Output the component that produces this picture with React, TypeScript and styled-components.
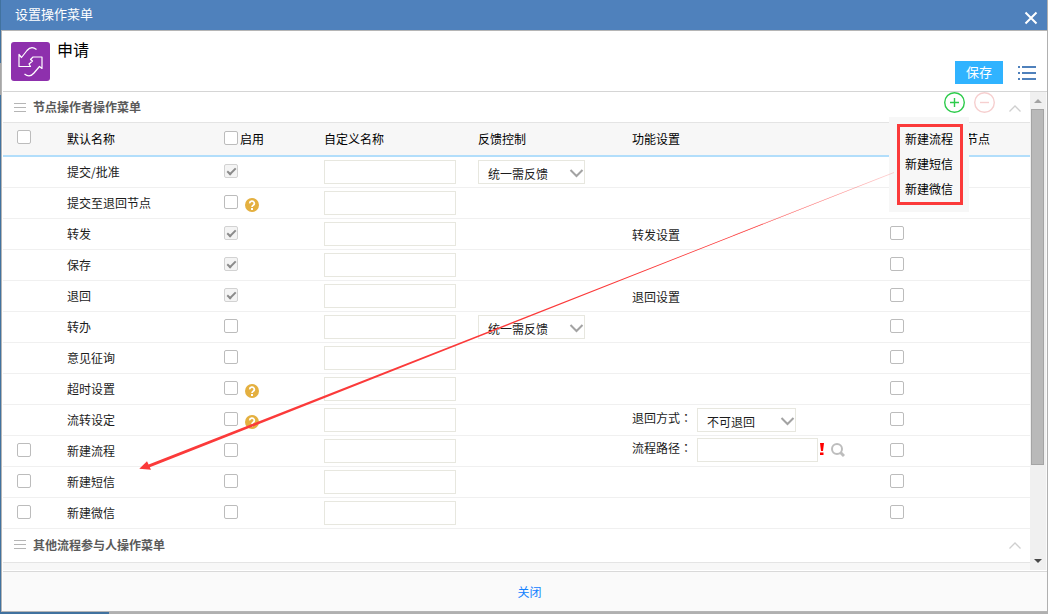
import React from "react";
import styled, { createGlobalStyle } from "styled-components";

const Global = createGlobalStyle`
  *, *::before, *::after { box-sizing: border-box; }
  body {
    margin: 0;
    background: #b0b0b0;
    color: #1c1c1c;
    font-family: "Noto Sans CJK SC", sans-serif;
    font-size: 12px;
    line-height: 16px;
  }
  button, input, select { font: inherit; color: inherit; margin: 0; }
`;

const Backdrop = styled.div`
  min-height: 100vh;
  display: flex;
  padding: 0 1px 2px 1px;
  background:
    linear-gradient(#a6a6a6, #a6a6a6) 0 63px / 1px 32px no-repeat,
    linear-gradient(#41729f, #41729f) 0 0 / 1px 100% no-repeat,
    linear-gradient(#41729f, #41729f) 0 100% / 109px 2px no-repeat,
    #b0b0b0;
`;

const Dialog = styled.main`
  position: relative;
  flex: 1;
  min-width: 0;
  display: flex;
  flex-direction: column;
  background: #fff;
  border-bottom: 1px solid #b5b5b5;
`;

const TitleBar = styled.header`
  height: 31px;
  display: flex;
  align-items: center;
  justify-content: space-between;
  padding: 0 9px 0 14px;
  background: #4f81bc;
  border-bottom: 1px solid #b5b5b5;
  color: #fff;
`;

const Title = styled.h1`
  margin: 0;
  padding-bottom: 2px;
  font-size: 13px;
  line-height: 20px;
  font-weight: 400;
`;

const IconButton = styled.button`
  display: flex;
  padding: 0;
  border: 0;
  background: none;
  cursor: pointer;
`;

const CloseIconButton = styled(IconButton)`
  padding-top: 6px;
`;

const Content = styled.div`
  flex: 1;
  min-height: 0;
  display: flex;
  flex-direction: column;
  padding-left: 1px;
  border-left: 1px solid #b5b5b5;
`;

const AppBar = styled.section`
  height: 61px;
  display: flex;
  justify-content: space-between;
  padding: 0 11px 7px 8px;
  border-bottom: 1px solid #d5d5d5;
`;

const AppInfo = styled.div`
  display: flex;
  gap: 7px;
  padding-top: 11px;
`;

const AppName = styled.h2`
  margin: 0;
  font-size: 16px;
  line-height: 14px;
  font-weight: 400;
  color: #000;
`;

const Actions = styled.div`
  display: flex;
  align-items: flex-end;
  gap: 14px;
`;

const SaveButton = styled.button`
  width: 48px;
  height: 23px;
  padding: 0 0 2px;
  border: 0;
  background: #30b3ff;
  color: #fff;
  font-size: 13px;
  line-height: 21px;
  cursor: pointer;
`;

const MenuButton = styled(IconButton)`
  padding-bottom: 4px;
`;

const ScrollPane = styled.div`
  flex: 1;
  min-height: 0;
  display: flex;
  border-bottom: 1px solid #fff;
`;

const PaneBody = styled.div`
  position: relative;
  flex: 1;
  min-width: 0;
  display: flex;
  flex-direction: column;
`;

const SectionBar = styled.div<{ $tall?: boolean }>`
  height: ${(p) => (p.$tall ? 34 : 31)}px;
  display: flex;
  align-items: center;
  justify-content: space-between;
  padding: 0 9px ${(p) => (p.$tall ? 2 : 0)}px 11px;
  border-bottom: 1px solid #e4e4e4;
`;

const SectionTitle = styled.h3`
  display: flex;
  align-items: center;
  gap: 7px;
  margin: 0;
  font-size: 12px;
  font-weight: 700;
  color: #5a5a5a;
`;

const SectionTools = styled.div<{ $top?: boolean }>`
  display: flex;
  align-items: flex-start;
  align-self: ${(p) => (p.$top ? "flex-start" : "center")};
  gap: 9px;
`;

const Collapse = styled(IconButton)<{ $low?: boolean }>`
  margin-left: 5px;
  padding-top: ${(p) => (p.$low ? 13 : 1)}px;
`;

const MenuTable = styled.table`
  width: 100%;
  table-layout: fixed;
  border-collapse: separate;
  border-spacing: 0;
`;

const HeadCell = styled.th<{ $check?: boolean }>`
  height: 34px;
  padding: 0 0 ${(p) => (p.$check ? 2 : 0)}px ${(p) => (p.$check ? 14 : 0)}px;
  background: #f7f7f7;
  border-bottom: 2px solid #b2defb;
  text-align: left;
  font-weight: 400;
  white-space: nowrap;
  color: #000;
`;

const Cell = styled.td<{ $check?: boolean }>`
  height: 31px;
  padding: 0 0 0 ${(p) => (p.$check ? 14 : 0)}px;
  border-bottom: 1px solid #f0f0f0;
  white-space: nowrap;
`;

const Inline = styled.div<{ $raised?: boolean }>`
  display: flex;
  align-items: center;
  margin-bottom: ${(p) => (p.$raised ? 2 : 0)}px;
`;

const Tick = styled.label<{ $gap: number }>`
  display: flex;
  align-items: center;
  gap: ${(p) => p.$gap}px;
  padding-bottom: 1px;
`;

const Box = styled.input.attrs({ type: "checkbox" })`
  appearance: none;
  flex: none;
  display: block;
  width: 14px;
  height: 14px;
  margin-bottom: 2px;
  border: 1px solid #bcbcbc;
  border-radius: 2px;
  background: #fff;

  &:disabled { background: #f4f4f4; border-color: #d2d2d2; }
  &:checked::after {
    content: "";
    display: block;
    width: 9px;
    height: 5px;
    margin: 3px 0 0 2px;
    border-left: 2px solid #8b8b8b;
    border-bottom: 2px solid #8b8b8b;
    transform: rotate(-45deg);
  }
`;

const HelpButton = styled(IconButton)`
  margin: 3px 0 0 7px;
`;

const Setting = styled.span`
  display: block;
  padding-top: 2px;
`;

const TextInput = styled.input<{ $w: number }>`
  display: block;
  width: ${(p) => p.$w}px;
  height: 24px;
  padding: 0 6px;
  border: 1px solid #e7e7df;
  background: #fff;
  outline: 0;
`;

const SelectWrap = styled.span<{ $w: number }>`
  display: grid;
  align-items: center;
  width: ${(p) => p.$w}px;
  > * { grid-area: 1 / 1; }
  > svg { justify-self: end; margin: 3px 1px 0 0; pointer-events: none; }
`;

const Select = styled.select`
  appearance: none;
  width: 100%;
  height: 24px;
  padding: 3px 20px 0 9px;
  border: 1px solid #e7e7df;
  border-radius: 0;
  background: #fff;
  outline: 0;
`;

const FieldLabel = styled.label`
  width: 65px;
  padding-bottom: 4px;
`;

const Colon = styled.span`
  font-family: "Noto Sans CJK TC", sans-serif;
`;

const Required = styled.span`
  width: 7px;
  padding-bottom: 2px;
  display: flex;
  justify-content: center;
`;

const NextSection = styled.div`
  flex: 1;
  min-height: 7px;
  background: #f7f7f7;
`;

const ScrollBar = styled.div`
  width: 17px;
  display: flex;
  flex-direction: column;
  align-items: center;
  padding: 7px 1px 7px 0;
  background: #f0f0f0;
  border-right: 1px solid #fafafa;
`;

const Track = styled.div`
  flex: 1;
  width: 13px;
  margin: 6px 0 5px;
`;

const Thumb = styled.div`
  height: 80%;
  background: #b9b9b9;
  border: 1px solid #a4a4a4;
`;

const Footer = styled.footer`
  height: 40px;
  display: flex;
  align-items: center;
  justify-content: center;
  padding: 1px 0 0 9px;
  background: #fafafa;
  border-top: 1px solid #d9d9d9;
`;

const CloseButton = styled.button`
  padding: 0;
  border: 0;
  background: none;
  color: #1281ff;
  cursor: pointer;
`;

const Popup = styled.div`
  position: absolute;
  top: 25px;
  right: 61px;
  padding: 7px 6px 7px 8px;
  background: #f7f7f7;
`;

const PopupList = styled.ul`
  width: 66px;
  margin: 0;
  padding: 0 0 0 5px;
  border: 3px solid #fb3a3a;
  list-style: none;
`;

const PopupItem = styled.button`
  display: block;
  height: 25px;
  padding: 0 0 2px;
  border: 0;
  background: none;
  color: #000;
`;

const Pointer = styled.svg`
  position: absolute;
  top: 74px;
  left: 130px;
  pointer-events: none;
`;

const Chevron = () => (
  <svg width="15" height="9" viewBox="0 0 15 9" fill="none" stroke="#a3a3a3" strokeWidth="2">
    <path d="M1.500 1L7.500 7L13.500 1" />
  </svg>
);

const Lines = () => (
  <svg width="12" height="9" viewBox="0 0 12 9" fill="#b5b5b5">
    <path d="M0 0h12v1H0zM0 4h12v1H0zM0 8h12v1H0z" />
  </svg>
);

const UpArrow = () => (
  <svg width="12" height="7" viewBox="0 0 12 7" fill="none" stroke="#cfcfcf" strokeWidth="1.300">
    <path d="M.5 6.500L6 1L11.500 6.500" />
  </svg>
);

const HelpIcon = () => (
  <svg width="14" height="14" viewBox="0 0 14 14">
    <circle cx="7" cy="7" r="7" fill="#e4b040" />
    <path d="M4.700 5.400a2.300 2.200 0 1 1 3.500 1.800C7.400 7.700 7 8 7 9" fill="none" stroke="#fff" strokeWidth="1.700" />
    <rect x="6" y="10" width="2" height="2" fill="#fff" />
  </svg>
);

const RoundIcon = ({ color, plus }: { color: string; plus?: boolean }) => (
  <svg width="21" height="21" viewBox="0 0 21 21" fill="none" stroke={color} strokeWidth="1.400">
    <circle cx="10.500" cy="10.500" r="9.800" />
    <path d={plus ? "M6 10.500h9M10.500 6v9" : "M6 10.500h9"} />
  </svg>
);

const FlowLogo = () => (
  <svg width="39" height="39" viewBox="0 0 39 39" fill="none">
    <rect width="39" height="39" rx="3" fill="#8e30ad" />
    <g stroke="#fff" strokeWidth="1.200" strokeLinejoin="round">
      <path d="M25.500 7.500C22 4.800 18.500 5.500 16 8.500L10.500 15.500L8 12.500V24.500H19.500L18 22L21.500 19L19.500 17.500L22 15H31V26.500L28.500 24.500L23 31C20 34.500 16.500 34.500 13.500 32" />
    </g>
  </svg>
);

type Row = {
  name: string;
  checked?: boolean;
  removable?: boolean;
  help?: boolean;
  feedback?: boolean;
  setting?: string;
  extra?: "mode" | "path";
};

const rows: Row[] = [
  { name: "提交/批准", checked: true, feedback: true },
  { name: "提交至退回节点", help: true },
  { name: "转发", checked: true, setting: "转发设置" },
  { name: "保存", checked: true },
  { name: "退回", checked: true, setting: "退回设置" },
  { name: "转办", feedback: true },
  { name: "意见征询" },
  { name: "超时设置", help: true },
  { name: "流转设定", help: true, extra: "mode" },
  { name: "新建流程", removable: true, extra: "path" },
  { name: "新建短信", removable: true },
  { name: "新建微信", removable: true },
];

const columns = [64, 157, 100, 154, 154, 0, 140];

const DropDown = ({ id, label, width, value }: { id?: string; label?: string; width: number; value: string }) => (
  <SelectWrap $w={width}>
    <Select id={id} aria-label={label} defaultValue={value}>
      <option>{value}</option>
    </Select>
    <Chevron />
  </SelectWrap>
);

const MenuRow = ({ row }: { row: Row }) => (
  <tr>
    <Cell $check>{row.removable && <Box aria-label={`选择${row.name}`} />}</Cell>
    <Cell>{row.name}</Cell>
    <Cell>
      <Inline>
        <Box aria-label={`启用${row.name}`} defaultChecked={row.checked} disabled={row.checked} />
        {row.help && (
          <HelpButton aria-label="帮助">
            <HelpIcon />
          </HelpButton>
        )}
      </Inline>
    </Cell>
    <Cell>
      <TextInput $w={132} aria-label={`${row.name}自定义名称`} />
    </Cell>
    <Cell>{row.feedback && <DropDown label={`${row.name}反馈控制`} width={107} value="统一需反馈" />}</Cell>
    <Cell>
      {row.setting && <Setting>{row.setting}</Setting>}
      {row.extra === "mode" && (
        <Inline>
          <FieldLabel htmlFor="back-mode">
            退回方式<Colon lang="zh-TW">：</Colon>
          </FieldLabel>
          <DropDown id="back-mode" width={99} value="不可退回" />
        </Inline>
      )}
      {row.extra === "path" && (
        <Inline $raised>
          <FieldLabel htmlFor="flow-path">
            流程路径<Colon lang="zh-TW">：</Colon>
          </FieldLabel>
          <TextInput $w={121} id="flow-path" />
          <Required>
            <svg width="4" height="12" viewBox="0 0 4 12" fill="#f00">
              <path d="M0 0h4L3 8H1zM0 9.500h3.500v2.500H0z" />
            </svg>
          </Required>
          <IconButton aria-label="查找">
            <svg width="20" height="16" viewBox="0 0 20 16" fill="none" stroke="#bdbdbd">
              <circle cx="12" cy="7" r="5" strokeWidth="2" />
              <path d="M15.500 10.500L19 14" strokeWidth="3" />
            </svg>
          </IconButton>
        </Inline>
      )}
    </Cell>
    <Cell>
      <Box aria-label={`同步${row.name}`} />
    </Cell>
  </tr>
);

export default function App() {
  return (
    <>
      <Global />
      <Backdrop>
        <Dialog>
          <TitleBar>
            <Title>设置操作菜单</Title>
            <CloseIconButton aria-label="关闭窗口">
              <svg width="14" height="14" viewBox="0 0 14 14" fill="none" stroke="#fff" strokeWidth="2">
                <path d="M1.500 1.500L12.500 12.500M12.500 1.500L1.500 12.500" />
              </svg>
            </CloseIconButton>
          </TitleBar>
          <Content>
            <AppBar>
              <AppInfo>
                <FlowLogo />
                <AppName>申请</AppName>
              </AppInfo>
              <Actions>
                <SaveButton>保存</SaveButton>
                <MenuButton aria-label="更多">
                  <svg width="19" height="14" viewBox="0 0 19 14" fill="#4f81bc">
                    <path d="M1 0h2v2H1zM5 0h14v2H5zM1 6h2v2H1zM5 6h14v2H5zM1 12h2v2H1zM5 12h14v2H5z" />
                  </svg>
                </MenuButton>
              </Actions>
            </AppBar>
            <ScrollPane>
              <PaneBody>
                <SectionBar>
                  <SectionTitle>
                    <Lines />
                    节点操作者操作菜单
                  </SectionTitle>
                  <SectionTools $top>
                    <IconButton aria-label="添加">
                      <RoundIcon color="#2dcb4b" plus />
                    </IconButton>
                    <IconButton aria-label="删除">
                      <RoundIcon color="#f6cfcf" />
                    </IconButton>
                    <Collapse $low aria-label="收起">
                      <UpArrow />
                    </Collapse>
                  </SectionTools>
                </SectionBar>
                <MenuTable>
                  <colgroup>
                    {columns.map((w, i) => (
                      <col key={i} width={w || undefined} />
                    ))}
                  </colgroup>
                  <thead>
                    <tr>
                      <HeadCell $check>
                        <Box aria-label="全选" />
                      </HeadCell>
                      <HeadCell>默认名称</HeadCell>
                      <HeadCell>
                        <Tick $gap={2}>
                          <Box />
                          启用
                        </Tick>
                      </HeadCell>
                      <HeadCell>自定义名称</HeadCell>
                      <HeadCell>反馈控制</HeadCell>
                      <HeadCell>功能设置</HeadCell>
                      <HeadCell>
                        <Tick $gap={62}>
                          <Box />
                          节点
                        </Tick>
                      </HeadCell>
                    </tr>
                  </thead>
                  <tbody>
                    {rows.map((row) => (
                      <MenuRow key={row.name} row={row} />
                    ))}
                  </tbody>
                </MenuTable>
                <SectionBar $tall>
                  <SectionTitle>
                    <Lines />
                    其他流程参与人操作菜单
                  </SectionTitle>
                  <SectionTools>
                    <Collapse aria-label="收起">
                      <UpArrow />
                    </Collapse>
                  </SectionTools>
                </SectionBar>
                <NextSection />
                <Popup>
                  <PopupList>
                    {["新建流程", "新建短信", "新建微信"].map((item) => (
                      <li key={item}>
                        <PopupItem>{item}</PopupItem>
                      </li>
                    ))}
                  </PopupList>
                </Popup>
                <Pointer width="770" height="310" viewBox="0 0 770 310" fill="#fb3a3a">
                  <path d="M6.300 302.700L14 295.300L15.600 298.600L762 6L16.800 301.200L18 303.700Z" />
                  <path d="M600 69.500L761 6.500" stroke="#fb3a3a" strokeWidth="1" strokeOpacity="0.200" />
                </Pointer>
              </PaneBody>
              <ScrollBar>
                <svg width="8" height="4" viewBox="0 0 8 4" fill="#a3a3a3">
                  <path d="M0 4L4 0L8 4z" />
                </svg>
                <Track>
                  <Thumb />
                </Track>
                <svg width="8" height="4" viewBox="0 0 8 4" fill="#484848">
                  <path d="M0 0L4 4L8 0z" />
                </svg>
              </ScrollBar>
            </ScrollPane>
            <Footer>
              <CloseButton>关闭</CloseButton>
            </Footer>
          </Content>
        </Dialog>
      </Backdrop>
    </>
  );
}
